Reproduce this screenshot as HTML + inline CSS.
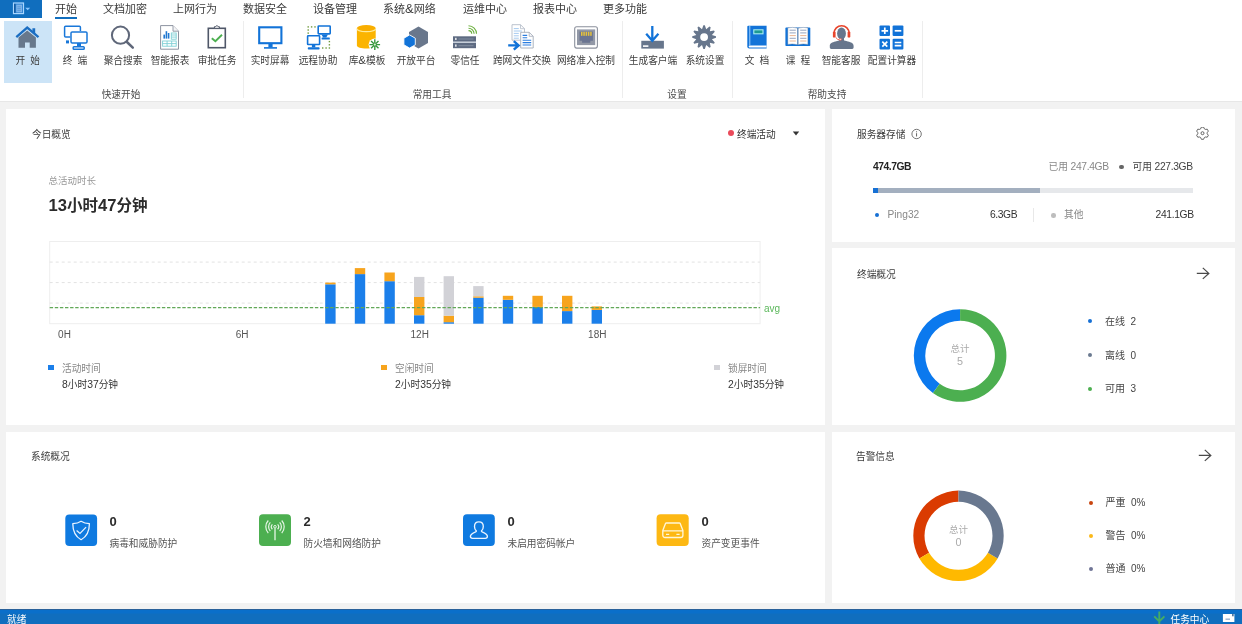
<!DOCTYPE html>
<html lang="zh-CN">
<head>
<meta charset="utf-8">
<title>Ping32</title>
<style>
*{box-sizing:border-box;margin:0;padding:0}
html,body{width:1242px;height:624px;overflow:hidden;background:#f2f2f2;font-family:"Liberation Sans","Noto Sans CJK SC",sans-serif;color:#333;}
.abs{position:absolute}
#app{position:absolute;left:0;top:0;width:1242px;height:624px;overflow:hidden;background:#f2f2f2;will-change:transform}
/* ribbon */
#ribbon{position:absolute;left:0;top:0;width:1242px;height:102px;background:#fff;border-bottom:1.4px solid #e7e7e7}
#appbtn{position:absolute;left:0;top:0;width:42px;height:18px;background:#106ebe}
.tab{position:absolute;top:0;height:18px;line-height:19px;font-size:11px;color:#3b3b3b;white-space:nowrap}
.tab.sel{border-bottom:2.6px solid #106ebe;height:18.7px}
.rb{position:absolute;top:21px;height:62px;width:48px;text-align:center;font-size:9.7px;color:#3e3e3e;white-space:nowrap}
.rb .lb{word-spacing:2.2px;position:absolute;left:-20px;right:-20px;top:33px;line-height:13px;text-align:center}
.rb svg{position:absolute;left:50%;top:3px;margin-left:-14px;width:28px;height:28px}
.rb.sel{background:#cce4f7}
.sep{position:absolute;top:21px;width:1px;height:77px;background:#ededed}
.grp{position:absolute;top:88px;font-size:9.7px;line-height:13px;color:#4a4a4a;white-space:nowrap;transform:translateX(-50%)}
/* panels */
.panel{position:absolute;background:#fff}
.ttl{position:absolute;font-size:9.7px;line-height:14px;color:#3c3c3c;white-space:nowrap}
.t{position:absolute;white-space:nowrap;line-height:14px;font-size:9.7px}
.dot{position:absolute;border-radius:50%}
.n{font-size:1.07em}
.n2{font-size:10.3px;letter-spacing:-0.35px}
.num{font-size:13px;font-weight:bold;color:#2b2b2b;line-height:17px}
#status{position:absolute;left:0;top:609px;width:1242px;height:15px;background:linear-gradient(#2a619a 0,#2a619a 1px,#0a6fca 1px,#0a6fca 4px,#106ebe 5px);color:#fff;font-size:9.7px;line-height:15px}
</style>
</head>
<body>
<div id="app">
<!-- RIBBON -->
<div id="ribbon">
  <div id="appbtn"></div>
  <div class="tab sel" style="left:55px">开始</div>
  <div class="tab" style="left:103px">文档加密</div>
  <div class="tab" style="left:173px">上网行为</div>
  <div class="tab" style="left:243px">数据安全</div>
  <div class="tab" style="left:313px">设备管理</div>
  <div class="tab" style="left:383px">系统<span style="font-size:13px;line-height:10px">&amp;</span>网络</div>
  <div class="tab" style="left:463px">运维中心</div>
  <div class="tab" style="left:533px">报表中心</div>
  <div class="tab" style="left:603px">更多功能</div>

  <div class="rb sel" style="left:3.5px;width:48.5px"><div class="lb">开 始</div></div>
  <div class="rb" style="left:51px"><div class="lb">终 端</div></div>
  <div class="rb" style="left:99px"><div class="lb">聚合搜索</div></div>
  <div class="rb" style="left:146px"><div class="lb">智能报表</div></div>
  <div class="rb" style="left:193px"><div class="lb">审批任务</div></div>
  <div class="sep" style="left:243px"></div>
  <div class="rb" style="left:246px"><div class="lb">实时屏幕</div></div>
  <div class="rb" style="left:294px"><div class="lb">远程协助</div></div>
  <div class="rb" style="left:343px"><div class="lb">库<span style="font-size:11.5px;line-height:10px">&amp;</span>模板</div></div>
  <div class="rb" style="left:392px"><div class="lb">开放平台</div></div>
  <div class="rb" style="left:441px"><div class="lb">零信任</div></div>
  <div class="rb" style="left:498px"><div class="lb">跨网文件交换</div></div>
  <div class="rb" style="left:562px"><div class="lb">网络准入控制</div></div>
  <div class="sep" style="left:622px"></div>
  <div class="rb" style="left:629px"><div class="lb">生成客户端</div></div>
  <div class="rb" style="left:681px"><div class="lb">系统设置</div></div>
  <div class="sep" style="left:732px"></div>
  <div class="rb" style="left:733px"><div class="lb">文 档</div></div>
  <div class="rb" style="left:774px"><div class="lb">课 程</div></div>
  <div class="rb" style="left:817px"><div class="lb">智能客服</div></div>
  <div class="rb" style="left:868px"><div class="lb">配置计算器</div></div>
  <div class="sep" style="left:922px"></div>

<svg class="abs" style="left:0;top:0" width="1242" height="101" viewBox="0 0 1242 101" id="icons">
<rect x="13.500" y="3" width="10" height="10.600" fill="#2a7fd0" stroke="#a9d6ff" stroke-width="1.200"/><rect x="14.300" y="3.800" width="1" height="9" fill="#0a4a8c"/><rect x="16.200" y="4.600" width="5.800" height="7.800" fill="#7db3e8"/><path d="M17.300 6.800h3.600M17.300 8.600h3.600M17.300 10.400h3.600" stroke="#4f8fd2" stroke-width="0.7"/><path d="M25.200 7.800h5l-2.500 2.400z" fill="#8cc6ff"/>
<path d="M18.5 37.5L27.2 30.6L35.9 37.5V47.8H29.7V42.5H25V47.8H18.5Z" fill="#67788c"/>
<path d="M32.4 28.3h2.8v5.5l-2.8-2.4z" fill="#1b6ec2"/>
<path d="M16.3 37.2L27.2 27.6L38.5 37.2" fill="none" stroke="#1b6ec2" stroke-width="2.3" stroke-linejoin="miter"/>
<g fill="none" stroke="#1877d9" stroke-width="1.5" stroke-linejoin="round"><path d="M70.3 37.1H65.6a1 1 0 0 1-1-1V27.2a1 1 0 0 1 1-1H79.4a1 1 0 0 1 1 1V31"/><rect x="71" y="31.9" width="16" height="11" rx="1.2"/><rect x="73.2" y="46.8" width="11" height="2.4" rx="0.8"/></g>
<rect x="77" y="43" width="4" height="3.8" fill="#1877d9"/><rect x="66" y="40.4" width="3" height="3" fill="#1877d9"/>
<circle cx="120.500" cy="35.200" r="8.600" fill="none" stroke="#5f6779" stroke-width="2"/><path d="M126.900 42L132.800 47.600" stroke="#5f6779" stroke-width="2.500" stroke-linecap="round"/>
<path d="M160.6 25.6H173L178.5 31.2V49.2H160.6Z" fill="#fff" stroke="#8d93a0" stroke-width="1"/><path d="M173 25.6V31.2H178.5" fill="#f4f4f6" stroke="#8d93a0" stroke-width="0.9"/>
<g fill="#1f78d1"><rect x="163.4" y="34.6" width="1.6" height="4"/><rect x="165.6" y="31.2" width="1.6" height="7.4"/><rect x="167.8" y="33" width="1.6" height="5.6"/></g>
<g fill="none" stroke="#7fd0d6" stroke-width="0.9"><rect x="171.3" y="33" width="4.9" height="6.2"/><path d="M171.3 35h4.9M171.3 37.1h4.9"/><rect x="162.6" y="41" width="13.6" height="5.2"/><path d="M162.6 43.6h13.6M167.1 41v5.2M171.7 41v5.2"/></g>
<rect x="208.3" y="28.3" width="17" height="19.4" fill="#fff" stroke="#4f5768" stroke-width="1.6"/><path d="M214.4 28.3v-1.6h1.1a1.5 1.5 0 0 1 2.8 0h1.1v1.6z" fill="#fff" stroke="#4f5768" stroke-width="1"/>
<path d="M211.8 38.2L215.4 41.2L222 34.8" fill="none" stroke="#4caf50" stroke-width="1.9"/>
<rect x="259.2" y="27.3" width="22.2" height="15.9" fill="#fff" stroke="#1273d8" stroke-width="2.1"/><rect x="268.4" y="44" width="4.2" height="3.4" fill="#1273d8"/><rect x="264" y="47.1" width="13" height="1.6" fill="#1273d8"/>
<g fill="#fff" stroke="#1273d8" stroke-width="1.6"><rect x="318.200" y="26" width="12" height="7.900" rx="0.6"/><rect x="307.600" y="35.800" width="12" height="8.700" rx="0.6"/></g><g fill="#1273d8"><path d="M321.400 34.500h6.600l-1.800 3h-3z"/><rect x="321.600" y="37.500" width="8.200" height="1.900" rx="0.5"/><rect x="311.900" y="45" width="3.400" height="2.400"/><rect x="307.800" y="47.200" width="11.800" height="2.300" rx="0.8"/></g><rect x="307.5" y="26.2" width="1.4" height="1.4" fill="#6f9a3c"/><rect x="310.9" y="26.2" width="1.4" height="1.4" fill="#6f9a3c"/><rect x="314.3" y="26.2" width="1.4" height="1.4" fill="#6f9a3c"/><rect x="307.5" y="29.3" width="1.4" height="1.4" fill="#6f9a3c"/><rect x="307.5" y="32.4" width="1.4" height="1.4" fill="#6f9a3c"/><rect x="328.7" y="40.9" width="1.4" height="1.4" fill="#6f9a3c"/><rect x="328.7" y="44.1" width="1.4" height="1.4" fill="#6f9a3c"/><rect x="328.7" y="47.3" width="1.4" height="1.4" fill="#6f9a3c"/><rect x="325.4" y="47.3" width="1.4" height="1.4" fill="#6f9a3c"/><rect x="322.0" y="47.3" width="1.4" height="1.4" fill="#6f9a3c"/>
<path d="M356.900 28.200v17.200c0 1.700 4.200 3 9.400 3s9.400-1.300 9.400-3V28.200z" fill="#fbb400"/><ellipse cx="366.300" cy="28.200" rx="9.400" ry="3.200" fill="#f9ae00"/><path d="M356.900 28.400c0 1.800 4.200 3.200 9.400 3.200s9.400-1.400 9.400-3.200" fill="none" stroke="#ffeb98" stroke-width="1.1"/><circle cx="374.8" cy="44.6" r="6.2" fill="#fff"/><path d="M369.5 44.6L380.1 44.6M371.1 40.9L378.5 48.3M374.8 39.3L374.8 49.9M378.5 40.9L371.1 48.3" stroke="#36973d" stroke-width="1.4"/><circle cx="374.8" cy="44.6" r="1.100" fill="#d8f2d0"/>
<polygon points="418.5,26.5 428.0,32.0 428.0,43.0 418.5,48.5 409.0,43.0 409.0,32.0" fill="#69778c"/>
<polygon points="409.6,34.9 415.3,38.2 415.3,44.8 409.6,48.1 403.9,44.8 403.9,38.2" fill="#1273d8" stroke="#fff" stroke-width="0.9"/>
<rect x="453" y="41.3" width="23" height="1.9" fill="#c6ced9"/><rect x="453" y="36.3" width="23" height="5.2" fill="#5e6b82"/><rect x="453" y="43" width="23" height="5.2" fill="#5e6b82"/><rect x="455.2" y="37.8" width="1.3" height="2.2" fill="#fff"/><rect x="455.2" y="44.5" width="1.3" height="2.2" fill="#fff"/><path d="M458.5 39h15M458.5 45.7h15" stroke="#8b97a8" stroke-width="0.8"/>
<g fill="none" stroke="#6aaf3c" stroke-width="1.1"><path d="M468.5 30.6a3.2 3.2 0 0 1 3.2 3.2"/><path d="M468.5 28.2a5.6 5.6 0 0 1 5.6 5.6"/><path d="M468.5 25.8a8 8 0 0 1 8 8"/></g>
<path d="M512 24.7H520.5L524.5 28.7V40.2H512Z" fill="#fff" stroke="#b4bcc8" stroke-width="0.9"/><path d="M520.5 24.7V28.7H524.5" fill="none" stroke="#b4bcc8" stroke-width="0.8"/><path d="M513.8 28.6h5M513.8 31h8M513.8 33.4h5M513.8 35.8h5M513.8 38.2h5" stroke="#9cc4ee" stroke-width="0.9"/>
<path d="M520.7 32.3H529.2L533.2 36.3V48H520.7Z" fill="#fff" stroke="#a3abb9" stroke-width="0.9"/><path d="M529.2 32.3V36.3H533.2" fill="none" stroke="#a3abb9" stroke-width="0.8"/><path d="M522.6 35.4h4.6M522.6 37.8h4.6M522.6 40.2h8.6M522.6 42.6h8.6M522.6 45h8.6" stroke="#2a7de0" stroke-width="1.1"/>
<path d="M508.200 45.400h9.500M513.800 41.200l4.800 4.200-4.800 4.200" fill="none" stroke="#1273d8" stroke-width="2.400"/>
<rect x="574.7" y="26.8" width="22.7" height="21.3" rx="2" fill="#fff" stroke="#8b909c" stroke-width="1.1"/><rect x="577" y="29.4" width="18.2" height="15.7" fill="#9298a6"/><path d="M579.5 31.6h13.4v9.2h-2.6v2h-8.2v-2h-2.6z" fill="#6a7491"/>
<g fill="#e6c23c"><rect x="581" y="31.8" width="1.5" height="4"/><rect x="583.3" y="31.8" width="1.5" height="4"/><rect x="585.6" y="31.8" width="1.5" height="4"/><rect x="587.9" y="31.8" width="1.5" height="4"/><rect x="590.2" y="31.8" width="1.5" height="4"/></g>
<rect x="641.3" y="40.8" width="22.6" height="7.8" fill="#67768c"/><rect x="643" y="45.300" width="5.400" height="1.600" fill="#fff"/><path d="M652.300 26V40.500M646.200 33.800L652.300 40.800L658.400 33.800" fill="none" stroke="#1273d8" stroke-width="2.300"/>
<polygon points="703.37,25.22 704.83,25.22 706.20,29.28 709.41,26.45 710.67,27.18 709.83,31.37 714.02,30.53 714.75,31.79 711.92,35.00 715.98,36.37 715.98,37.83 711.92,39.20 714.75,42.41 714.02,43.67 709.83,42.83 710.67,47.02 709.41,47.75 706.20,44.92 704.83,48.98 703.37,48.98 702.00,44.92 698.79,47.75 697.53,47.02 698.37,42.83 694.18,43.67 693.45,42.41 696.28,39.20 692.22,37.83 692.22,36.37 696.28,35.00 693.45,31.79 694.18,30.53 698.37,31.37 697.53,27.18 698.79,26.45 702.00,29.28" fill="#67768c"/><circle cx="704.1" cy="37.1" r="3.9" fill="#fff"/>
<path d="M747.3 26.8a1 1 0 0 1 1-1H766.6V48.6H749.3a2 2 0 0 1-2-2Z" fill="#1273d8"/><path d="M749.800 26V45.200" stroke="#9fd0ff" stroke-width="1"/><path d="M749.6 45.6H766.6V47.4H749.6a0.9 0.9 0 0 1 0-1.8Z" fill="#fff"/><rect x="753.800" y="29.800" width="9.200" height="4" fill="#1d9a92" stroke="#a6ecf2" stroke-width="1.1"/>
<rect x="785.400" y="27.600" width="24.900" height="18.400" rx="0.8" fill="#1273d8"/><path d="M787.800 27.900Q792.600 26.700 797.500 28.200V44.700Q792.600 43.300 787.800 44.400Z" fill="#fff" stroke="#5a6a85" stroke-width="0.35"/><path d="M807.900 27.900Q803.100 26.700 798.200 28.200V44.700Q803.100 43.300 807.900 44.400Z" fill="#fff" stroke="#5a6a85" stroke-width="0.35"/><path d="M789.600 30.2h6.200M800.200 30.2h6.200" stroke="#8a9ab8" stroke-width="0.9"/><path d="M789.600 32.9h6.200M800.200 32.9h6.200" stroke="#8a9ab8" stroke-width="0.9"/><path d="M789.600 35.6h6.200M800.200 35.6h6.200" stroke="#e9ad86" stroke-width="0.9"/><path d="M789.600 38.3h6.200M800.200 38.3h6.200" stroke="#8a9ab8" stroke-width="0.9"/><path d="M789.600 41h6.200M800.200 41h6.200" stroke="#e9ad86" stroke-width="0.9"/>
<ellipse cx="841.500" cy="33.500" rx="4.400" ry="5.900" fill="#67768c"/><rect x="839.200" y="37" width="4.800" height="5" fill="#67768c"/><path d="M829.800 47.600v-1.600c0-2.600 2.400-3.800 5.600-4.500l3.600-.9h5.400l3.600.9c3.200.7 5.600 1.900 5.600 4.500v1.600a1.400 1.400 0 0 1-1.400 1.400h-21a1.400 1.400 0 0 1-1.400-1.400z" fill="#67768c"/><path d="M834.100 33.200a7.500 7.500 0 0 1 15 0" fill="none" stroke="#e8452c" stroke-width="1.600"/><rect x="832.900" y="31.400" width="2.700" height="6.200" rx="1.200" fill="#e8452c"/><rect x="847.600" y="31.400" width="2.700" height="6.200" rx="1.200" fill="#e8452c"/><path d="M836 37.400c.4 1.600 1.800 2.200 3.400 2.200" fill="none" stroke="#e8452c" stroke-width="0.8"/><rect x="839" y="38.600" width="2.600" height="1.700" rx="0.8" fill="#fbe4e0" stroke="#e8452c" stroke-width="0.5"/><g fill="#1273d8"><rect x="879.500" y="25.500" width="10.500" height="10.600" rx="1"/><rect x="892.600" y="25.500" width="10.800" height="10.600" rx="1"/><rect x="879.500" y="38.700" width="10.500" height="10.700" rx="1"/><rect x="892.600" y="38.700" width="10.800" height="10.700" rx="1"/></g><g stroke="#fff" stroke-width="1.700" fill="none"><path d="M881.500 30.800h6.600M884.800 27.500v6.600"/><path d="M894.700 30.800h6.600"/><path d="M882.300 41.600l5 5M887.300 41.600l-5 5"/><path d="M894.700 42.500h6.600M894.700 45.700h6.600"/></g>
</svg>
  <div class="grp" style="left:121px">快速开始</div>
  <div class="grp" style="left:432px">常用工具</div>
  <div class="grp" style="left:677px">设置</div>
  <div class="grp" style="left:827px">帮助支持</div>
</div>

<!-- PANEL 1: today overview -->
<div class="panel" id="p1" style="left:6px;top:109px;width:819px;height:316px"></div>
<div class="ttl" style="left:32px;top:128px">今日概览</div>
<div class="dot" style="left:728px;top:130px;width:6px;height:6px;background:#ea4a5a"></div>
<div class="t" style="left:737px;top:128px;color:#333">终端活动</div>
<svg class="abs" style="left:792px;top:131px" width="8" height="5" viewBox="0 0 8 5"><path d="M0.8 0.6h6.4L4 4.4z" fill="#333"/></svg>
<div class="t" style="left:48.5px;top:174.4px;color:#999;font-size:9.5px">总活动时长</div>
<div class="t" style="left:48.5px;top:195px;color:#2b2b2b;font-size:15.5px;font-weight:bold;line-height:22px"><span class="n">13</span>小时<span class="n">47</span>分钟</div>
<svg class="abs" style="left:0;top:230px" width="830" height="120" viewBox="0 230 830 120">
<rect x="49.7" y="241.5" width="710.4" height="82.2" fill="none" stroke="#eeeeee" stroke-width="1"/>
<line x1="49.7" x2="760.1" y1="262.1" y2="262.1" stroke="#e2e2e2" stroke-width="1" stroke-dasharray="3 3"/>
<line x1="49.7" x2="760.1" y1="282.6" y2="282.6" stroke="#e2e2e2" stroke-width="1" stroke-dasharray="3 3"/>
<line x1="49.7" x2="760.1" y1="303.1" y2="303.1" stroke="#e2e2e2" stroke-width="1" stroke-dasharray="3 3"/>
<rect x="325.2" y="284.3" width="10.4" height="39.4" fill="#1b7fea"/>
<rect x="325.2" y="282.6" width="10.4" height="1.7" fill="#f7a41d"/>
<rect x="354.8" y="274.1" width="10.4" height="49.6" fill="#1b7fea"/>
<rect x="354.8" y="268.1" width="10.4" height="6.0" fill="#f7a41d"/>
<rect x="384.4" y="281.2" width="10.4" height="42.5" fill="#1b7fea"/>
<rect x="384.4" y="272.5" width="10.4" height="8.7" fill="#f7a41d"/>
<rect x="414.0" y="315.2" width="10.4" height="8.5" fill="#1b7fea"/>
<rect x="414.0" y="297.0" width="10.4" height="18.2" fill="#f7a41d"/>
<rect x="414.0" y="276.9" width="10.4" height="20.1" fill="#d2d2d7"/>
<rect x="443.6" y="322.2" width="10.4" height="1.5" fill="#1b7fea"/>
<rect x="443.6" y="315.7" width="10.4" height="6.5" fill="#f7a41d"/>
<rect x="443.6" y="276.2" width="10.4" height="39.5" fill="#d2d2d7"/>
<rect x="473.2" y="297.7" width="10.4" height="26.0" fill="#1b7fea"/>
<rect x="473.2" y="296.3" width="10.4" height="1.4" fill="#f7a41d"/>
<rect x="473.2" y="286.1" width="10.4" height="10.2" fill="#d2d2d7"/>
<rect x="502.8" y="299.8" width="10.4" height="23.9" fill="#1b7fea"/>
<rect x="502.8" y="295.8" width="10.4" height="4.0" fill="#f7a41d"/>
<rect x="532.4" y="306.9" width="10.4" height="16.8" fill="#1b7fea"/>
<rect x="532.4" y="295.8" width="10.4" height="11.1" fill="#f7a41d"/>
<rect x="562.0" y="311.1" width="10.4" height="12.6" fill="#1b7fea"/>
<rect x="562.0" y="295.8" width="10.4" height="15.3" fill="#f7a41d"/>
<rect x="591.6" y="309.9" width="10.4" height="13.8" fill="#1b7fea"/>
<rect x="591.6" y="306.4" width="10.4" height="3.5" fill="#f7a41d"/>
<line x1="49.7" x2="760.1" y1="307.7" y2="307.7" stroke="#62a858" stroke-width="1.3" stroke-dasharray="3.4 1.7"/>
<text x="64.5" y="337.5" text-anchor="middle" font-size="10" fill="#555">0H</text>
<text x="242.1" y="337.5" text-anchor="middle" font-size="10" fill="#555">6H</text>
<text x="419.7" y="337.5" text-anchor="middle" font-size="10" fill="#555">12H</text>
<text x="597.3" y="337.5" text-anchor="middle" font-size="10" fill="#555">18H</text>
<text x="764" y="311.5" font-size="10" fill="#5cb85c">avg</text>
</svg>
<div class="abs" style="left:48px;top:365px;width:5.6px;height:5.2px;background:#1b7fea"></div>
<div class="t" style="left:62px;top:361.5px;color:#888">活动时间</div>
<div class="t" style="left:62px;top:377.5px;color:#333"><span class="n">8</span>小时<span class="n">37</span>分钟</div>
<div class="abs" style="left:381px;top:365px;width:5.6px;height:5.2px;background:#f7a41d"></div>
<div class="t" style="left:395px;top:361.5px;color:#888">空闲时间</div>
<div class="t" style="left:395px;top:377.5px;color:#333"><span class="n">2</span>小时<span class="n">35</span>分钟</div>
<div class="abs" style="left:714px;top:365px;width:5.6px;height:5.2px;background:#d2d2d7"></div>
<div class="t" style="left:728px;top:361.5px;color:#888">锁屏时间</div>
<div class="t" style="left:728px;top:377.5px;color:#333"><span class="n">2</span>小时<span class="n">35</span>分钟</div>
<!-- PANEL 2: storage -->
<div class="panel" id="p2" style="left:832px;top:109px;width:403px;height:133px"></div>
<div class="ttl" style="left:857px;top:128px">服务器存储</div>
<svg class="abs" style="left:910px;top:127px" width="14" height="14" viewBox="0 0 14 14"><circle cx="6.6" cy="7" r="4.7" fill="none" stroke="#666" stroke-width="0.9"/><rect x="6.15" y="6.2" width="0.9" height="3.3" fill="#555"/><rect x="6.15" y="4.3" width="0.9" height="1" fill="#555"/></svg>
<svg class="abs" style="left:1196px;top:127px" width="14" height="14" viewBox="0 0 14 14" id="gear"><path d="M5.42 0.09L7.58 0.09L8.41 1.91L9.26 2.40L11.25 2.21L12.33 4.08L11.17 5.71L11.17 6.69L12.33 8.32L11.25 10.19L9.26 10.00L8.41 10.49L7.58 12.31L5.42 12.31L4.59 10.49L3.74 10.00L1.75 10.19L0.67 8.32L1.83 6.69L1.83 5.71L0.67 4.08L1.75 2.21L3.74 2.40L4.59 1.91Z" fill="none" stroke="#555" stroke-width="0.9" stroke-linejoin="round"/><circle cx="6.5" cy="6.2" r="1.5" fill="none" stroke="#555" stroke-width="0.9"/></svg>
<div class="t" style="left:873px;top:160px;font-weight:bold;font-size:10.3px;letter-spacing:-0.45px;color:#222">474.7GB</div>
<div class="t" style="left:1048.5px;top:160px;font-size:9.7px;color:#888">已用 <span class="n2">247.4GB</span></div>
<div class="dot" style="left:1119px;top:164.5px;width:4.5px;height:4.5px;background:#666"></div>
<div class="t" style="left:1132.5px;top:160px;font-size:9.7px;color:#444">可用 <span class="n2">227.3GB</span></div>
<div class="abs" style="left:873px;top:188.3px;width:320px;height:4.4px;background:#e6e8eb"></div>
<div class="abs" style="left:873px;top:188.3px;width:167px;height:4.4px;background:#a3afbf"></div>
<div class="abs" style="left:873px;top:188.3px;width:5px;height:4.4px;background:#1670d4"></div>
<div class="dot" style="left:874.5px;top:213px;width:4px;height:4px;background:#1670d4"></div>
<div class="t" style="left:887.5px;top:208px;font-size:10.2px;color:#888">Ping32</div>
<div class="t" style="left:990px;top:208px;font-size:10.3px;letter-spacing:-0.4px;color:#333">6.3GB</div>
<div class="abs" style="left:1033px;top:208px;width:1px;height:14px;background:#e8e8e8"></div>
<div class="dot" style="left:1051px;top:213px;width:4.5px;height:4.5px;background:#bdbdbd"></div>
<div class="t" style="left:1064px;top:208px;color:#888">其他</div>
<div class="t" style="left:1155.5px;top:208px;font-size:10.3px;letter-spacing:-0.35px;color:#333">241.1GB</div>
<!-- PANEL 3: terminals -->
<div class="panel" id="p3" style="left:832px;top:248px;width:403px;height:177px"></div>
<div class="ttl" style="left:857px;top:268px">终端概况</div>
<svg class="abs" style="left:1195.3px;top:265.8px" width="16" height="15" viewBox="0 0 16 15"><path d="M1.8 7.4h12M7.8 1.9l6 5.500-6 5.500" fill="none" stroke="#4a4a4a" stroke-width="1.25"/></svg>
<svg class="abs" style="left:832px;top:248px" width="403" height="177" viewBox="832 248 403 177">
<path d="M960.10 309.20A46.3 46.3 0 0 0 932.89 392.96L939.65 383.65A34.8 34.8 0 0 1 960.10 320.70Z" fill="#0b79ee"/>
<path d="M932.89 392.96A46.3 46.3 0 1 0 960.10 309.20L960.10 320.70A34.8 34.8 0 1 1 939.65 383.65Z" fill="#4caf50"/>
<text x="960" y="352" text-anchor="middle" font-size="9.5" fill="#aaa">总计</text>
<text x="960" y="365" text-anchor="middle" font-size="10.8" fill="#aaa">5</text>
</svg>
<div class="dot" style="left:1088px;top:319.2px;width:4px;height:4px;background:#1670d4"></div>
<div class="t" style="left:1105px;top:315px;font-size:10px;color:#444">在线&nbsp; 2</div>
<div class="dot" style="left:1088px;top:353px;width:4px;height:4px;background:#6b7a90"></div>
<div class="t" style="left:1105px;top:349px;font-size:10px;color:#444">离线&nbsp; 0</div>
<div class="dot" style="left:1088px;top:386.5px;width:4px;height:4px;background:#4caf50"></div>
<div class="t" style="left:1105px;top:382px;font-size:10px;color:#444">可用&nbsp; 3</div>
<!-- PANEL 4: system overview -->
<div class="panel" id="p4" style="left:6px;top:432px;width:819px;height:171px"></div>
<div class="ttl" style="left:31px;top:450px">系统概况</div>
<svg class="abs" style="left:65px;top:514px" width="33" height="33" viewBox="65 514 33 33"><rect x="65.3" y="514.4" width="31.8" height="31.6" rx="4" fill="#0f7ae0"/><path d="M81.1 521.3c-2.4 1.6-5.2 2.3-8.3 2.4c0 7 2 12.500 8.300 16c6.300-3.500 8.300-9 8.300-16c-3.100-.1-5.900-.8-8.300-2.400z" fill="none" stroke="#eaf4ff" stroke-width="1.3" stroke-linejoin="round"/><path d="M76.600 530.500L80 533.500L86.100 527.100" fill="none" stroke="#eaf4ff" stroke-width="1.2"/></svg>
<div class="t num" style="left:109.5px;top:513px">0</div>
<div class="t" style="left:109.5px;top:536.5px;color:#555">病毒和威胁防护</div>
<svg class="abs" style="left:259px;top:514px" width="33" height="33" viewBox="259 514 33 33"><rect x="259" y="514.300" width="32" height="31.700" rx="4" fill="#4caf50"/><path d="M277.63 524.34A3.6 3.6 0 0 1 277.63 529.26M272.37 524.34A3.6 3.6 0 0 0 272.37 529.26M279.68 522.44A6.4 6.4 0 0 1 279.68 531.16M270.32 522.44A6.4 6.4 0 0 0 270.32 531.16M281.73 520.53A9.2 9.2 0 0 1 281.73 533.07M268.27 520.53A9.2 9.2 0 0 0 268.27 533.07" fill="none" stroke="#e6f6e6" stroke-width="1.2"/><circle cx="275.0" cy="526.8" r="1.300" fill="none" stroke="#e6f6e6" stroke-width="1"/><path d="M275.0 528.1999999999999V540.300" stroke="#e6f6e6" stroke-width="1.300"/></svg>
<div class="t num" style="left:303.5px;top:513px">2</div>
<div class="t" style="left:303.5px;top:536.5px;color:#555">防火墙和网络防护</div>
<svg class="abs" style="left:462px;top:514px" width="34" height="33" viewBox="462 514 34 33"><rect x="463" y="514.300" width="31.800" height="31.700" rx="4" fill="#0f7ae0"/><path d="M478.900 521.900c-2.700 0-4.400 2-4.400 4.600c0 1.700.6 3.200 1.700 4.200c.3.300.2.800-.2 1c-2.800 1.100-5.600 2.100-5.600 4.600c0 1.300.9 2.100 2.100 2.100h12.800c1.200 0 2.100-.8 2.100-2.100c0-2.500-2.800-3.500-5.600-4.600c-.4-.2-.5-.7-.2-1c1.100-1 1.700-2.500 1.700-4.200c0-2.600-1.700-4.600-4.400-4.600z" fill="none" stroke="#eaf4ff" stroke-width="1.35" stroke-linejoin="round"/></svg>
<div class="t num" style="left:507.5px;top:513px">0</div>
<div class="t" style="left:507.5px;top:536.5px;color:#555">未启用密码帐户</div>
<svg class="abs" style="left:656px;top:514px" width="34" height="33" viewBox="656 514 34 33"><rect x="656.600" y="514.300" width="32.100" height="31.700" rx="4" fill="#fdb813"/><path d="M666.400 523h12.900a1 1 0 0 1 .9.600l2.700 6.900v4.800a2.200 2.200 0 0 1-2.200 2.200h-15.700a2.200 2.200 0 0 1-2.200-2.200v-4.800l2.700-6.900a1 1 0 0 1 .9-.6zM662.800 530.800h20.100" fill="none" stroke="#fff6d8" stroke-width="1.35" stroke-linejoin="round"/><path d="M666 534.300h3.200M676.400 534.300h3.200" stroke="#fff6d8" stroke-width="1.300"/></svg>
<div class="t num" style="left:701.5px;top:513px">0</div>
<div class="t" style="left:701.5px;top:536.5px;color:#555">资产变更事件</div>
<!-- PANEL 5: alerts -->
<div class="panel" id="p5" style="left:832px;top:432px;width:403px;height:171px"></div>
<div class="ttl" style="left:856px;top:450px">告警信息</div>
<svg class="abs" style="left:1196.8px;top:448.4px" width="16" height="15" viewBox="0 0 16 15"><path d="M1.8 7.4h12M7.8 1.9l6 5.500-6 5.500" fill="none" stroke="#4a4a4a" stroke-width="1.25"/></svg>
<svg class="abs" style="left:832px;top:432px" width="403" height="171" viewBox="832 432 403 171">
<path d="M958.50 490.60A45.2 45.2 0 0 0 919.36 558.40L929.06 552.80A34 34 0 0 1 958.50 501.80Z" fill="#da3b01"/>
<path d="M919.36 558.40A45.2 45.2 0 0 0 997.64 558.40L987.94 552.80A34 34 0 0 1 929.06 552.80Z" fill="#ffb900"/>
<path d="M997.64 558.40A45.2 45.2 0 0 0 958.50 490.60L958.50 501.80A34 34 0 0 1 987.94 552.80Z" fill="#69788f"/>
<text x="958.5" y="533" text-anchor="middle" font-size="9.5" fill="#aaa">总计</text>
<text x="958.5" y="546" text-anchor="middle" font-size="10.8" fill="#aaa">0</text>
</svg>
<div class="dot" style="left:1088.5px;top:500.5px;width:4px;height:4px;background:#c8450f"></div>
<div class="t" style="left:1105.5px;top:495.5px;font-size:10px;color:#444">严重&nbsp; 0%</div>
<div class="dot" style="left:1088.5px;top:533.5px;width:4px;height:4px;background:#fbb91a"></div>
<div class="t" style="left:1105.5px;top:528.5px;font-size:10px;color:#444">警告&nbsp; 0%</div>
<div class="dot" style="left:1088.5px;top:566.5px;width:4px;height:4px;background:#707596"></div>
<div class="t" style="left:1105.5px;top:561.5px;font-size:10px;color:#444">普通&nbsp; 0%</div>

<div id="status"><span class="abs" style="left:7px;top:2.5px">就绪</span>
<svg class="abs" style="left:1152px;top:0" width="16" height="15" viewBox="1152 609 16 15"><path d="M1159.300 611.500V624M1154.200 616.300L1159.300 621.500L1164.400 616.300" fill="none" stroke="#45ad63" stroke-width="1.900"/></svg>
<span class="abs" style="left:1170.500px;top:2.500px">任务中心</span>
<svg class="abs" style="left:1221px;top:0" width="16" height="15" viewBox="1221 609 16 15"><rect x="1222.900" y="614" width="11.500" height="8" fill="#fff"/><rect x="1225.500" y="618.600" width="4.500" height="1.100" fill="#7f9cc0"/><rect x="1232.300" y="614" width="1.200" height="2.300" fill="#0c3f74"/></svg>
</div>
</div>
</body>
</html>
